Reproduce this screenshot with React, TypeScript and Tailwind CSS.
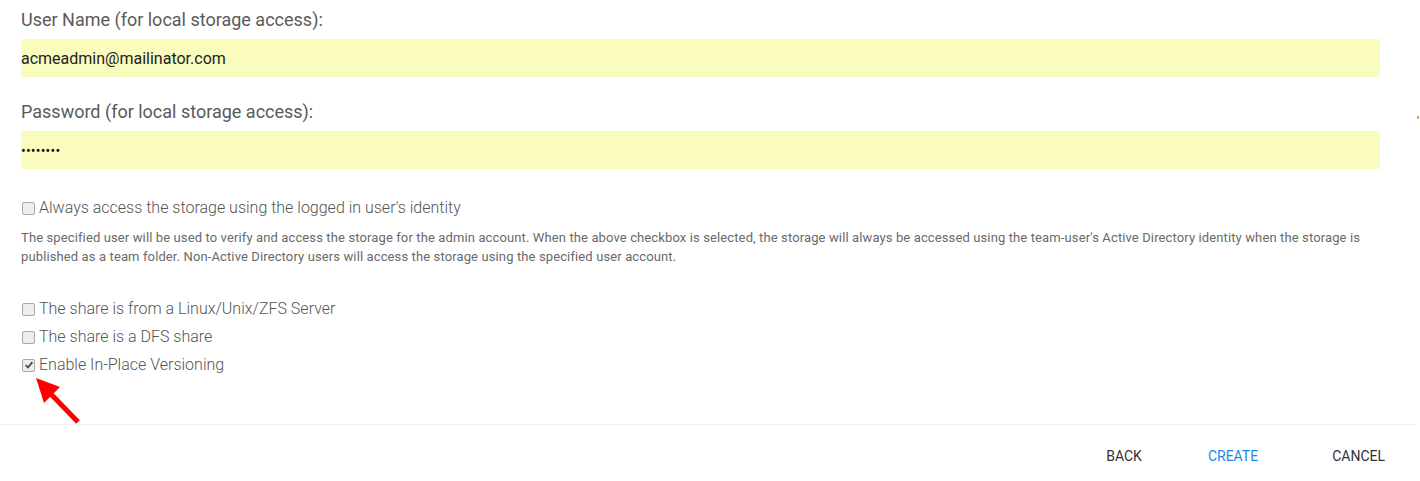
import { FC } from "react";

const Box: FC<{ checked?: boolean }> = ({ checked }) => (
  <span className="relative inline-flex h-[13px] w-[13px] shrink-0 items-center justify-center rounded-[2px] border border-[#a9a9a9] bg-[#ededed]">
    {checked && (
      <svg viewBox="0 0 12 12" className="h-[10px] w-[10px]">
        <path d="M2 6.2 L4.8 9 L10 2.6" fill="none" stroke="#4a4a4a" strokeWidth="2.2" />
      </svg>
    )}
  </span>
);

const CheckRow: FC<{ label: string; checked?: boolean; className?: string }> = ({ label, checked, className }) => (
  <label className={`flex h-[20px] items-center gap-[4px] pl-[1px] text-[16px] font-light text-[#555] ${className ?? ""}`}>
    <Box checked={checked} />
    <span>{label}</span>
  </label>
);

const App: FC = () => {
  return (
    <div className="relative h-[481px] w-[1420px] overflow-hidden bg-white font-['Roboto',sans-serif]">
      <div className="pl-[21px] pr-[40px]">
        {/* Credentials */}
        <p className="mt-[8px] h-[24px] text-[18px] leading-[24px] text-[#5a5a5a]">User Name (for local storage access):</p>
        <input
          readOnly
          value="acmeadmin@mailinator.com"
          className="mt-[7px] block h-[38px] w-full bg-[#fafcbd] p-0 text-[16px] text-[#222] outline-none"
        />
        <p className="mt-[23px] h-[24px] text-[18px] leading-[24px] text-[#5a5a5a]">Password (for local storage access):</p>
        <div className="mt-[7px] flex h-[38px] w-full items-center bg-[#fafcbd] pt-[3px] text-[14px] tracking-[0.2px] text-[#111]">
          ••••••••
        </div>

        {/* Options */}
        <CheckRow className="mt-[29px]" label="Always access the storage using the logged in user's identity" />
        <p className="mt-[10px] text-[13px] leading-[19px] tracking-[0.12px] text-[#6a6a6a]">
          The specified user will be used to verify and access the storage for the admin account. When the above checkbox is selected, the storage will always be accessed using the team-user's Active Directory identity when the storage is published as a team folder. Non-Active Directory users will access the storage using the specified user account.
        </p>
        <CheckRow className="mt-[33px]" label="The share is from a Linux/Unix/ZFS Server" />
        <CheckRow className="mt-[8px]" label="The share is a DFS share" />
        <div className="relative mt-[8px]">
          <CheckRow checked label="Enable In-Place Versioning" />
          <svg className="absolute left-[9px] top-[18px] h-[55px] w-[55px]" viewBox="0 0 55 55">
            <line x1="17" y1="17" x2="48" y2="49" stroke="#ff0000" strokeWidth="5" />
            <polygon points="6,5 30,14 14,30" fill="#ff0000" />
          </svg>
        </div>
      </div>

      {/* Footer */}
      <div className="mt-[49px] w-[1416px] border-t border-[#efefef]">
        <div className="flex h-[62px] items-center justify-end pr-[31px] text-[14px] font-normal">
          <button className="text-[#333]">BACK</button>
          <button className="ml-[66px] text-[#1e88e5]">CREATE</button>
          <button className="ml-[74px] text-[#333]">CANCEL</button>
        </div>
      </div>

      <span className="absolute left-[1417px] top-[116px] h-[3px] w-[2px] bg-[#f0a050]" />
    </div>
  );
};

export default App;
